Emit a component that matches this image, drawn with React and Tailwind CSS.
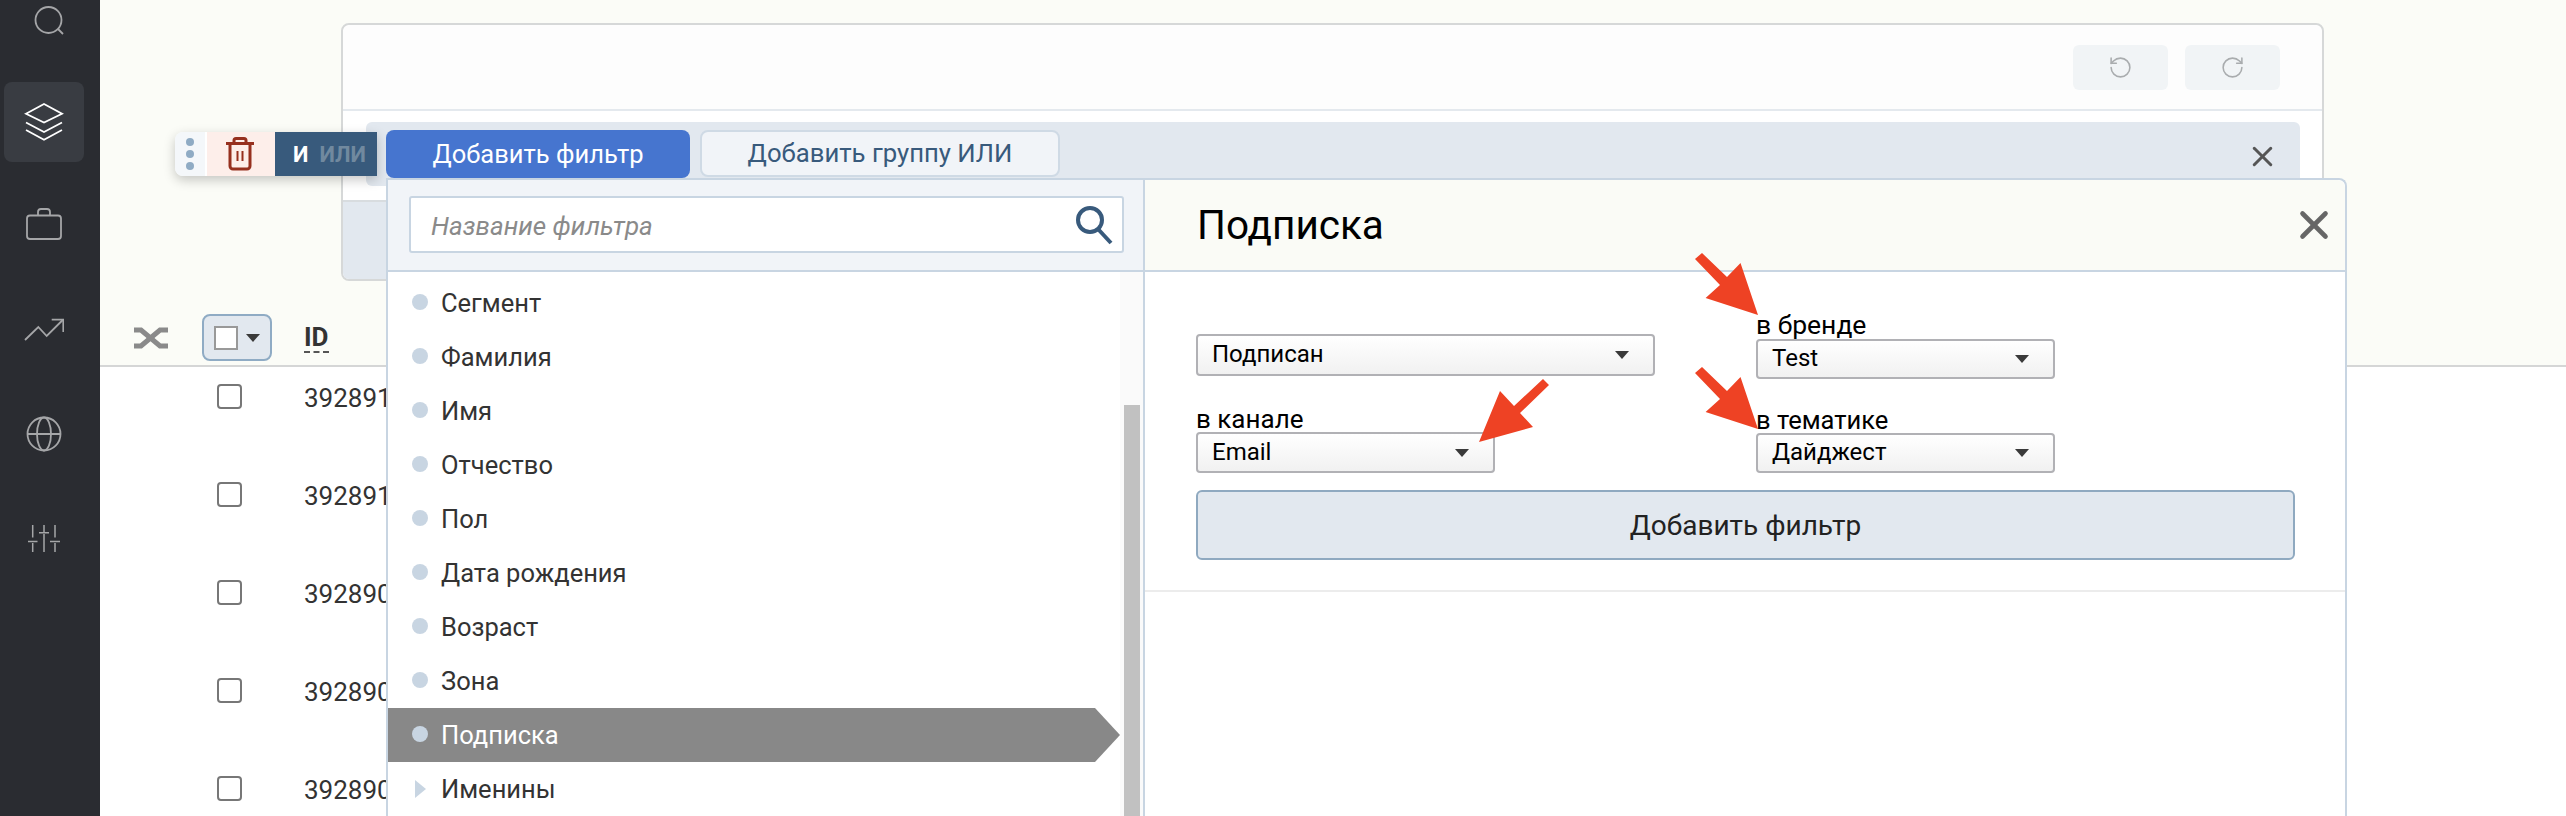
import { RotateCcw, RotateCw, X } from "lucide-react";

const FONT = "font-['Roboto','Liberation_Sans',sans-serif]";

const filters = ["Сегмент", "Фамилия", "Имя", "Отчество", "Пол", "Дата рождения", "Возраст", "Зона", "Подписка", "Именины"];
const rows = ["3928911", "3928910", "3928909", "3928908", "3928907"];

function SearchIcon() {
  return (
    <svg viewBox="0 0 40 40" className="w-10 h-10" fill="none" stroke="#a5a6a8" strokeWidth="1.8">
      <circle cx="18.5" cy="22" r="13" />
      <path d="M28 31l5 5" />
    </svg>
  );
}

function LayersIcon() {
  return (
    <svg viewBox="0 0 40 40" className="w-10 h-10" fill="none" stroke="#ffffff" strokeWidth="1.8">
      <path d="M2 11.7L20 2l18 9.7-18 8.8z" />
      <path d="M2 20.5L20 30l18-9.500" />
      <path d="M2 28l18 9.700L38 28" />
    </svg>
  );
}

function BriefcaseIcon() {
  return (
    <svg viewBox="0 0 40 40" className="w-10 h-10" fill="none" stroke="#a5a6a8" strokeWidth="1.8">
      <rect x="3" y="9.500" width="34" height="23.500" rx="3" />
      <path d="M14 9.500V6a3 3 0 0 1 3-3h6a3 3 0 0 1 3 3v3.500" />
    </svg>
  );
}

function TrendIcon() {
  return (
    <svg viewBox="0 0 40 40" className="w-10 h-10" fill="none" stroke="#a5a6a8" strokeWidth="1.8">
      <path d="M1 30L14.300 17l8.400 9L38.700 10" />
      <path d="M27.700 9.600h11.600V22" />
    </svg>
  );
}

function GlobeIcon() {
  return (
    <svg viewBox="0 0 40 40" className="w-10 h-10" fill="none" stroke="#a5a6a8" strokeWidth="1.8">
      <circle cx="20" cy="20" r="16.500" />
      <ellipse cx="20" cy="20" rx="7" ry="16.500" />
      <path d="M3.500 20h33" />
    </svg>
  );
}

function SlidersIcon() {
  return (
    <svg viewBox="0 0 40 40" className="w-10 h-10" fill="none" stroke="#a5a6a8" strokeWidth="1.5">
      <path d="M8.700 7v12.500M8.700 25v9M4 23.500h9.500" />
      <path d="M20 7v7.500M20 16v18M15 14.700h10" />
      <path d="M31 7v12.500M31 25v9M26 23.500h10" />
    </svg>
  );
}

function TrashIcon() {
  return (
    <svg viewBox="0 0 30 34" className="w-[30px] h-[34px] -ml-[2px]" fill="none" stroke="#96301f" strokeWidth="3">
      <path d="M1 6.500h28" />
      <path d="M9 6V3.500A2 2 0 0 1 11 1.500h8a2 2 0 0 1 2 2V6" />
      <path d="M5 7v22a3 3 0 0 0 3 3h14a3 3 0 0 0 3-3V7" />
      <path d="M12.500 14v10M17.500 14v10" strokeWidth="2" />
    </svg>
  );
}

function ShuffleIcon() {
  return (
    <svg viewBox="0 0 34 24" className="w-[34px] h-6" fill="none" stroke="#8a8a8a" strokeWidth="5">
      <path d="M0 4h7l19 16h8" />
      <path d="M0 20h7L26 4h8" />
    </svg>
  );
}

function Caret() {
  return <span className="w-0 h-0 border-x-[7px] border-x-transparent border-t-[8px] border-t-[#3a3a3a]" />;
}

function Select({ value, className }) {
  return (
    <div className={`flex items-center justify-between pl-[14px] pr-[24px] border-2 border-[#b1b1b5] rounded-[4px] bg-gradient-to-b from-white to-[#f1f1f1] text-[24px] text-black ${className}`}>
      <span className="-mt-[2px]">{value}</span>
      <Caret />
    </div>
  );
}

function Arrow({ className, points }) {
  return (
    <svg viewBox="0 0 70 70" className={`absolute w-[70px] h-[70px] ${className}`}>
      <polygon points={points} fill="#ee4224" />
    </svg>
  );
}

// tail top-left, tip bottom-right
const ARROW_DOWN = "1,12 8,6 33,30 46.500,16 64,68 11.600,51 26,38";
// tail top-right, tip bottom-left
const ARROW_LEFT = "70,6 64,0 35,27 21,12 0,63 54,48 41,34";

export default function App() {
  return (
    <div className={`relative flex w-[2566px] h-[816px] overflow-hidden bg-white ${FONT}`}>
      <aside className="w-[100px] shrink-0 bg-[#2a2c31] px-1 flex flex-col gap-6 -mt-[22px]">
        <div className="h-20 shrink-0 flex items-center justify-center"><SearchIcon /></div>
        <div className="h-20 shrink-0 flex items-center justify-center rounded-[8px] bg-[#393c42] w-20"><LayersIcon /></div>
        <div className="h-20 shrink-0 w-20 flex items-center justify-center"><BriefcaseIcon /></div>
        <div className="h-20 shrink-0 w-20 flex items-center justify-center"><TrendIcon /></div>
        <div className="h-20 shrink-0 w-20 flex items-center justify-center"><GlobeIcon /></div>
        <div className="h-20 shrink-0 w-20 flex items-center justify-center"><SlidersIcon /></div>
      </aside>

      <main className="flex-1 flex flex-col min-w-0">
        <div className="h-[367px] shrink-0 bg-[#fbfcf7] border-b-2 border-[#d5d6d6] pt-[23px] pl-[241px] pr-[242px]">
          <div className="h-[258px] border-2 border-[#d6d8d8] rounded-[8px] bg-white flex flex-col">
            <div className="h-[86px] shrink-0 bg-[#fdfdfd] rounded-t-[8px] border-b-2 border-[#e4e9ee] flex justify-end items-start pt-5 pr-[42px] gap-[17px]">
              <button className="w-[95px] h-[45px] rounded-[6px] bg-[#f1f4f6] flex items-center justify-center text-[#a9acae]">
                <RotateCcw size={25} strokeWidth={1.5} />
              </button>
              <button className="w-[95px] h-[45px] rounded-[6px] bg-[#f1f4f6] flex items-center justify-center text-[#a9acae]">
                <RotateCw size={25} strokeWidth={1.5} />
              </button>
            </div>
            <div className="h-[91px] shrink-0 pl-[23px] pr-[22px] pt-[11px] border-b-2 border-[#d8dcdf]">
              <div className="relative h-[64px] rounded-[6px] bg-[#e2e8ef] flex items-start gap-[10px] pl-[20px] pt-[8px]">
                <div className="absolute left-[-191px] top-[10px] h-[44px] flex rounded-l-[8px] overflow-hidden shadow-[0_4px_12px_rgba(0,0,0,0.22)]">
                  <div className="w-[30px] bg-[#f4f7fa] flex flex-col items-center justify-center gap-1">
                    <span className="w-2 h-2 rounded-full bg-[#8fabc4]" />
                    <span className="w-2 h-2 rounded-full bg-[#8fabc4]" />
                    <span className="w-2 h-2 rounded-full bg-[#8fabc4]" />
                  </div>
                  <div className="w-[70px] bg-[#fdeeea] border-l-2 border-white flex items-center justify-center"><TrashIcon /></div>
                  <div className="w-[102px] bg-[#385a7c] flex items-center pl-[18px] gap-[11px] text-[22px] font-bold">
                    <span className="text-white">И</span>
                    <span className="text-[#71899f]">ИЛИ</span>
                  </div>
                </div>
                <button className="w-[304px] h-[48px] rounded-[8px] bg-[#4675cf] text-white text-[25.5px] flex items-center justify-center">Добавить фильтр</button>
                <button className="w-[360px] h-[47px] rounded-[8px] bg-[#f1f4f8] border-2 border-[#cfdae5] text-[#385a7c] text-[25.7px] flex items-center justify-center">Добавить группу ИЛИ</button>
                <X className="absolute right-[21px] top-[18px] text-[#555]" size={33} strokeWidth={2.2} />
              </div>
            </div>
            <div className="flex-1 bg-[#e2e8ef] rounded-b-[6px]" />
          </div>

          <div className="flex items-center mt-[33px] -ml-[207px]">
            <ShuffleIcon />
            <div className="ml-[34px] w-[70px] h-[47px] rounded-[8px] border-2 border-[#8fabc4] bg-[#e2e8ef] flex items-center justify-center gap-[8px]">
              <span className="w-[24px] h-[24px] bg-white border-2 border-[#999]" />
              <Caret />
            </div>
            <span className="ml-[32px] text-[26px] font-bold text-[#333] leading-[28px] border-b-2 border-dashed border-[#555]">ID</span>
          </div>
        </div>

        <div className="flex flex-col gap-10 pl-[117px]">
          {rows.map((id) => (
            <div key={id} className="h-[58px] shrink-0 flex items-center gap-[62px]">
              <span className="w-[25px] h-[25px] rounded-[4px] border-2 border-[#777] bg-white" />
              <span className="text-[26px] text-[#333] mt-[4px]">{id}</span>
            </div>
          ))}
        </div>
      </main>

      <section className="absolute left-[386px] top-[178px] bottom-0 w-[1961px] flex bg-white border-x-2 border-[#c8d5e2] border-t-2 rounded-tr-[8px]">
        <div className="w-[757px] shrink-0 flex flex-col border-r-2 border-[#c8d5e2]">
          <div className="h-[92px] shrink-0 bg-[#f1f4f8] border-b-2 border-[#c8d5e2] pl-[21px] pr-[19px] pt-[16px]">
            <div className="h-[57px] bg-white border-2 border-[#c8d5e2] rounded-[3px] flex items-center justify-between pl-[20px] pr-[8px]">
              <span className="text-[26px] italic text-[#8a8a8a] mt-[3px]">Название фильтра</span>
              <svg viewBox="0 0 40 40" className="w-10 h-10" fill="none" stroke="#385a7c" strokeWidth="4">
                <circle cx="16" cy="15" r="12" />
                <path d="M24 24l13 14" />
              </svg>
            </div>
          </div>
          <div className="flex-1 flex min-h-0">
            <ul className="w-[732px] shrink-0 pt-[4px]">
              {filters.map((name) => {
                const active = name === "Подписка";
                return (
                  <li
                    key={name}
                    className={`h-[54px] flex items-center pl-[24px] gap-[13px] text-[25.5px] ${active ? "bg-[#888888] text-white [clip-path:polygon(0_0,707px_0,100%_50%,707px_100%,0_100%)]" : "text-[#333]"}`}
                  >
                    {name === "Именины" ? (
                      <span className="w-4 flex justify-center">
                        <span className="w-0 h-0 border-y-[9px] border-y-transparent border-l-[11px] border-l-[#c8d5e2]" />
                      </span>
                    ) : (
                      <span className="w-4 h-4 rounded-full bg-[#c8d5e2] -mt-[2px]" />
                    )}
                    <span>{name}</span>
                  </li>
                );
              })}
            </ul>
            <div className="flex-1 bg-[#fafafa] pl-1 pt-[133px]">
              <div className="w-4 h-full bg-[#c1c1c1]" />
            </div>
          </div>
        </div>

        <div className="flex-1 flex flex-col min-w-0">
          <div className="h-[92px] shrink-0 bg-[#fafbf6] border-b-2 border-[#c8d5e2] flex items-center justify-between pl-[52px] pr-[8px] rounded-tr-[8px]">
            <h2 className="text-[40.500px] text-black">Подписка</h2>
            <X size={46} strokeWidth={2.4} className="text-[#666]" />
          </div>
          <div className="pl-[51px] pr-[50px] border-b-2 border-[#ececec] pb-[30px]">
            <div className="flex">
              <div className="w-[560px] shrink-0 pt-[62px]">
                <Select value="Подписан" className="w-[459px] h-[42px]" />
                <div className="mt-[31px] h-[25px] text-[26px] leading-[24px] text-black">в канале</div>
                <Select value="Email" className="w-[299px] h-[41px]" />
              </div>
              <div className="pt-[41px]">
                <div className="h-[26px] text-[26.500px] leading-[24px] text-black">в бренде</div>
                <Select value="Test" className="w-[299px] h-[40px]" />
                <div className="mt-[29px] h-[25px] text-[25.500px] leading-[24px] text-black">в тематике</div>
                <Select value="Дайджест" className="w-[299px] h-[40px]" />
              </div>
            </div>
            <button className="mt-[17px] w-full h-[70px] pt-[2px] rounded-[6px] bg-[#e2e8ef] border-2 border-[#8fa9c0] text-[28px] text-[#222]">Добавить фильтр</button>
          </div>
        </div>
      </section>

      <Arrow className="left-[1694px] top-[247px]" points={ARROW_DOWN} />
      <Arrow className="left-[1694px] top-[361px]" points={ARROW_DOWN} />
      <Arrow className="left-[1479px] top-[379px]" points={ARROW_LEFT} />
    </div>
  );
}
